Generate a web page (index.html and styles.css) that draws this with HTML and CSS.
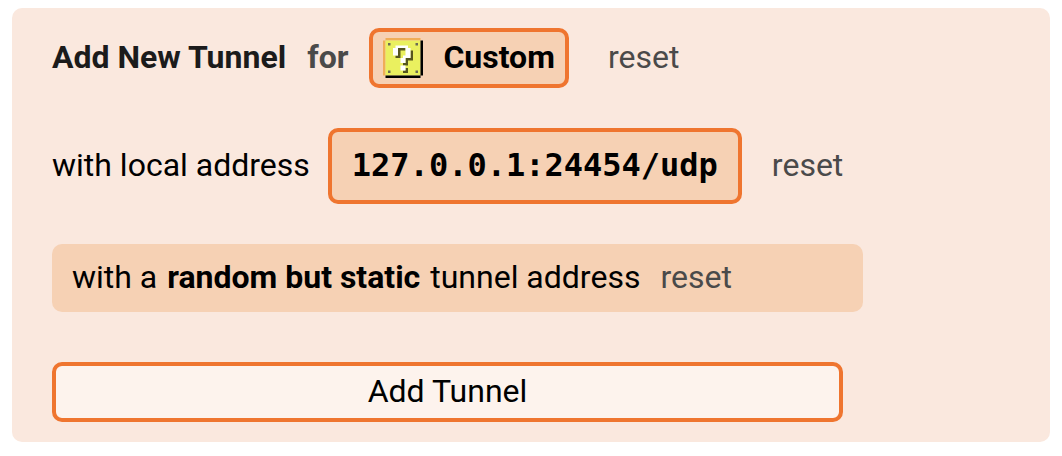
FILE: index.html
```html
<!DOCTYPE html>
<html lang="en">
<head>
<meta charset="utf-8">
<meta name="viewport" content="width=device-width, initial-scale=1">
<title>Add New Tunnel</title>
<link rel="stylesheet" href="styles.css">
</head>
<body>
<form class="card">
  <div class="row row-type">
    <h1 class="title">Add New Tunnel</h1>
    <span class="label for">for</span>
    <button class="chip chip-type" type="button">
      <svg class="block-icon" viewBox="0 0 16 16" aria-hidden="true">
        <path fill="#f0ad58" d="M1 0h14v1H1v14H0V1h1z"/>
        <path fill="#eaf05f" d="M1 1h14v14H1z"/>
        <path fill="#000" d="M15 1h1v14h-1v1H1v-1h14z"/>
        <path fill="#6b6b55" d="M2 2h1v1H2zM13 2h1v1h-1zM2 13h1v1H2zM13 13h1v1h-1z"/>
        <path fill="#56561f" d="M6 4h3v1H7v3H5V7h1zM11 5h1v4H9V8h2zM9 9h1v2H8v-1h1zM9 12h1v2H8v-1h1z"/>
        <path fill="#fff" d="M5 3h5v1h1v4H9v2H7V8h1V7h1V4H6v3H4V4h1zM7 11h2v2H7z"/>
      </svg>
      <span class="label">Custom</span>
    </button>
    <button class="label reset" type="button">reset</button>
  </div>
  <div class="row row-address">
    <span class="label">with local address</span>
    <button class="chip chip-address" type="button">127.0.0.1:24454/udp</button>
    <button class="label reset" type="button">reset</button>
  </div>
  <div class="row row-filled">
    <span class="label">with a <strong>random but static</strong> tunnel address</span>
    <button class="label reset" type="button">reset</button>
  </div>
  <button class="submit" type="submit">Add Tunnel</button>
</form>
</body>
</html>
```

FILE: styles.css
```css
* {
  box-sizing: border-box;
}

body {
  margin: 8px 12px;
  background: #fff;
  color: #000;
  font-family: Roboto, sans-serif;
  font-size: 32px;
  line-height: 36px;
}

button {
  margin: 0;
  padding: 0;
  border: 0;
  background: none;
  color: inherit;
  font: inherit;
  cursor: pointer;
}

strong {
  margin: 0 2px;
}

.card {
  display: flex;
  flex-direction: column;
  gap: 40px;
  padding: 20px 40px;
  border-radius: 10px;
  background: #fae8de;
}

.row {
  display: flex;
  flex-wrap: wrap;
  align-items: center;
  column-gap: 20px;
}

.row-type {
  column-gap: 21px;
}

.row-address {
  column-gap: 18px;
}

.label,
.title {
  padding-bottom: 2px;
}

.title {
  margin: 0;
  color: #1b1b1b;
  font-size: 32px;
  font-weight: 700;
}

.for {
  color: #4a4a4a;
  font-weight: 700;
}

.chip {
  border: 4px solid #ef752f;
  border-radius: 10px;
  background: #f6d1b4;
  font-weight: 700;
}

.chip-type {
  display: flex;
  align-items: center;
  gap: 20px;
  padding: 6px 10px;
}

.block-icon {
  width: 40px;
  height: 40px;
}

.chip-address {
  padding: 15px 20px 17px;
  font-family: "DejaVu Sans Mono", monospace;
}

.reset {
  color: #4a4a4a;
}

.row-type .reset {
  margin-left: 18px;
}

.row-address .reset {
  margin-left: 12px;
}

.row-filled {
  width: 100%;
  max-width: 811px;
  padding: 15px 20px;
  border-radius: 10px;
  background: #f6d1b4;
}

.submit {
  width: 100%;
  max-width: 791px;
  margin-top: 10px;
  padding: 7px 20px 9px;
  border: 4px solid #ef752f;
  border-radius: 10px;
  background: #fdf3ed;
}
```
